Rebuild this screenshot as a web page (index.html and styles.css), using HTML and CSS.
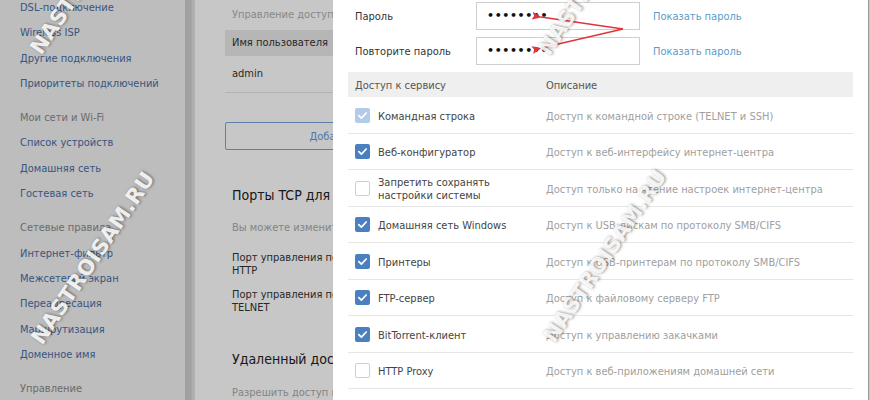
FILE: index.html
```html
<!DOCTYPE html>
<html lang="ru">
<head>
    <meta charset="UTF-8">
    <title>Пользователи и доступ</title>
    <link rel="stylesheet" href="styles.css">
</head>
<body>
    <div class="page">
        <aside class="sidebar">
            <ul class="menu">
                <li><a href="#">DSL-подключение</a></li>
                <li><a href="#">Wireless ISP</a></li>
                <li><a href="#">Другие подключения</a></li>
                <li><a href="#">Приоритеты подключений</a></li>
                <li class="group">Мои сети и Wi-Fi</li>
                <li><a href="#">Список устройств</a></li>
                <li><a href="#">Домашняя сеть</a></li>
                <li><a href="#">Гостевая сеть</a></li>
                <li class="group">Сетевые правила</li>
                <li><a href="#">Интернет-фильтр</a></li>
                <li><a href="#">Межсетевой экран</a></li>
                <li><a href="#">Переадресация</a></li>
                <li><a href="#">Маршрутизация</a></li>
                <li><a href="#">Доменное имя</a></li>
                <li class="group">Управление</li>
            </ul>
        </aside>
        <div class="edge"></div>

        <main class="content">
            <p class="intro">Управление доступом пользователей к интернет-центру</p>
            <div class="users">
                <div class="users-head">Имя пользователя</div>
                <div class="users-row">admin</div>
            </div>
            <button class="add-btn">Добавить пользователя</button>

            <h2>Порты TCP для управления интернет-центром</h2>
            <p class="note">Вы можете изменить порты управления интернет-центром</p>
            <div class="port">Порт управления по протоколу<br>HTTP</div>
            <div class="port port-second">Порт управления по протоколу<br>TELNET</div>

            <h2 class="remote">Удаленный доступ</h2>
            <p class="note note-last">Разрешить доступ из интернета</p>
        </main>
    </div>

    <div class="backdrop"></div>

    <!-- User settings dialog -->
    <div class="modal">
        <div class="pass-row">
            <label class="pass-label">Пароль</label>
            <div class="pass-input">••••••••</div>
            <a href="#" class="show-link">Показать пароль</a>
        </div>
        <div class="pass-row">
            <label class="pass-label">Повторите пароль</label>
            <div class="pass-input">••••••••</div>
            <a href="#" class="show-link">Показать пароль</a>
        </div>

        <div class="access">
            <div class="access-head">
                <span class="col-name">Доступ к сервису</span>
                <span class="col-desc">Описание</span>
            </div>
            <div id="accessRows"></div>
        </div>
    </div>

    <svg class="arrows" width="870" height="400" viewBox="0 0 870 400">
        <defs>
            <marker id="head" markerWidth="10" markerHeight="8" refX="1" refY="4" orient="auto-start-reverse" markerUnits="userSpaceOnUse">
                <path d="M0,4 L10,0 L8,4 L10,8 Z" fill="#e0353a"/>
            </marker>
        </defs>
        <line x1="623" y1="29" x2="541" y2="17" stroke="#e0353a" stroke-width="1.5" marker-end="url(#head)"/>
        <line x1="623" y1="29" x2="541" y2="48" stroke="#e0353a" stroke-width="1.5" marker-end="url(#head)"/>
    </svg>

    <div class="wm wm-a">NASTROISAM.RU</div>
    <div class="wm wm-b">NASTROISAM.RU</div>
    <div class="wm wm-c">NASTROISAM.RU</div>
    <div class="wm wm-d">NASTROISAM.RU</div>

    <script>
        const services = [
            { name: 'Командная строка', desc: 'Доступ к командной строке (TELNET и SSH)', state: 'locked' },
            { name: 'Веб-конфигуратор', desc: 'Доступ к веб-интерфейсу интернет-центра', state: 'on' },
            { name: 'Запретить сохранять<br>настройки системы', desc: 'Доступ только на чтение настроек интернет-центра', state: 'off' },
            { name: 'Домашняя сеть Windows', desc: 'Доступ к USB-дискам по протоколу SMB/CIFS', state: 'on' },
            { name: 'Принтеры', desc: 'Доступ к USB-принтерам по протоколу SMB/CIFS', state: 'on' },
            { name: 'FTP-сервер', desc: 'Доступ к файловому серверу FTP', state: 'on' },
            { name: 'BitTorrent-клиент', desc: 'Доступ к управлению закачками', state: 'on' },
            { name: 'HTTP Proxy', desc: 'Доступ к веб-приложениям домашней сети', state: 'off' }
        ];

        const tick = '<svg width="15" height="15" viewBox="0 0 15 15"><polyline points="3.8,7.6 6.4,10.2 11.2,5" fill="none" stroke="#fff" stroke-width="1.7" stroke-linecap="round" stroke-linejoin="round"/></svg>';

        document.getElementById('accessRows').innerHTML = services.map(s => `
            <div class="access-row">
                <span class="col-name">
                    <span class="check ${s.state}">${s.state === 'off' ? '' : tick}</span>
                    <span class="name">${s.name}</span>
                </span>
                <span class="col-desc">${s.desc}</span>
            </div>
        `).join('');
    </script>
</body>
</html>
```

FILE: styles.css
```css
* {
    box-sizing: border-box;
    margin: 0;
    padding: 0;
}

html, body {
    width: 870px;
    height: 400px;
    overflow: hidden;
}

body {
    font-family: 'DejaVu Sans Condensed', 'DejaVu Sans', Verdana, sans-serif;
    font-stretch: condensed;
    font-size: 11px;
    color: #333;
    background: #fff;
    position: relative;
}

a {
    text-decoration: none;
}

/* Page under the dialog */
.page {
    display: flex;
    height: 400px;
}

.sidebar {
    width: 185px;
    flex-shrink: 0;
    background: #f2f2f2;
}

.menu {
    list-style: none;
    margin-top: -5px;
    padding-left: 20px;
}

.menu li {
    line-height: 25.3px;
    white-space: nowrap;
}

.menu a {
    color: #4a6ea6;
}

.menu .group {
    color: #8a8a8a;
    margin-top: 9px;
}

.edge {
    width: 10px;
    flex-shrink: 0;
    background: linear-gradient(to right, #cdcdcd 0, #d0d0d0 6px, #dedede 7px, #e6e6e6 10px);
}

.content {
    flex: 1;
    padding: 0 30px;
    background: #fff;
    white-space: nowrap;
    overflow: hidden;
}

.intro {
    height: 30px;
    line-height: 30px;
    padding-left: 7px;
    color: #b0b0b0;
}

.users-head {
    height: 26px;
    line-height: 26px;
    padding-left: 7px;
    background: #e9e9e9;
    color: #333;
}

.users-row {
    height: 37px;
    line-height: 35px;
    padding-left: 7px;
    border-bottom: 1px solid #e4e4e4;
}

.add-btn {
    display: block;
    margin-top: 29px;
    width: 294px;
    height: 28px;
    background: #fff;
    border: 1px solid #7aa3dc;
    border-radius: 2px;
    color: #6a98dc;
    font-family: inherit;
    font-stretch: condensed;
    font-size: 11px;
}

.content h2 {
    margin-top: 35px;
    padding-left: 7px;
    font-size: 14px;
    font-weight: normal;
    line-height: 20px;
    color: #222;
}

.note {
    margin-top: 15px;
    padding-left: 7px;
    line-height: 16px;
    color: #aaa;
}

.port {
    margin-top: 15px;
    padding-left: 7px;
    line-height: 13px;
    color: #333;
}

.port-second {
    margin-top: 11px;
}

.content h2.remote {
    margin-top: 35px;
}

.note-last {
    margin-top: 16px;
}

.backdrop {
    position: absolute;
    inset: 0;
    background: rgba(0, 0, 0, 0.22);
}

/* Dialog */
.modal {
    position: absolute;
    top: 0;
    left: 333px;
    width: 536px;
    height: 400px;
    background: #fff;
    border-right: 1px solid #9a9a9a;
    padding: 2px 15px 0 15px;
}

.pass-row {
    display: flex;
    align-items: center;
    height: 28px;
    margin-bottom: 7px;
}

.pass-label {
    width: 128px;
    padding-left: 7px;
    padding-top: 1px;
    color: #333;
}

.pass-input {
    width: 164px;
    height: 28px;
    border: 1px solid #cfcfcf;
    padding-left: 10px;
    line-height: 26px;
    font-family: 'DejaVu Sans', sans-serif;
    font-stretch: normal;
    font-size: 11px;
    font-weight: bold;
    letter-spacing: 0.6px;
    color: #111;
}

.show-link {
    margin-left: 13px;
    padding-top: 1px;
    color: #5b9cc8;
}

.access {
    margin-top: 1px;
}

.access-head {
    display: flex;
    align-items: center;
    height: 25px;
    padding-top: 2px;
    background: #efefef;
    color: #555;
}

.access-row {
    display: flex;
    align-items: center;
    height: 36.5px;
    padding-top: 3px;
    border-bottom: 1px solid #e6e6e6;
}

.col-name {
    width: 198px;
    flex-shrink: 0;
    padding-left: 7px;
    display: flex;
    align-items: center;
}

.col-desc {
    color: #a0a0a0;
    white-space: nowrap;
}

.access-head .col-desc {
    color: #555;
}

.name {
    margin-left: 8px;
    line-height: 13px;
    color: #444;
}

.check {
    width: 15px;
    height: 15px;
    flex-shrink: 0;
    border-radius: 2px;
    display: flex;
    margin-top: -2px;
}

.check.on {
    background: #4a7fc0;
}

.check.locked {
    background: #b2cbe8;
}

.check.off {
    border: 1px solid #cfcfcf;
    background: #fff;
}

/* Overlays */
.arrows {
    position: absolute;
    top: 0;
    left: 0;
}

.wm {
    position: absolute;
    transform: translate(-50%, -50%) rotate(-56deg);
    font-family: 'DejaVu Sans', sans-serif;
    font-stretch: normal;
    font-weight: bold;
    font-size: 21px;
    letter-spacing: 0.3px;
    color: rgba(255, 255, 255, 0.9);
    text-shadow: 1px 1px 3px rgba(0, 0, 0, 0.45);
    white-space: nowrap;
}

.wm-a {
    left: 93px;
    top: 258px;
}

.wm-b {
    left: 92px;
    top: -32px;
}

.wm-c {
    left: 600px;
    top: -31px;
}

.wm-d {
    left: 605px;
    top: 256px;
}
```
